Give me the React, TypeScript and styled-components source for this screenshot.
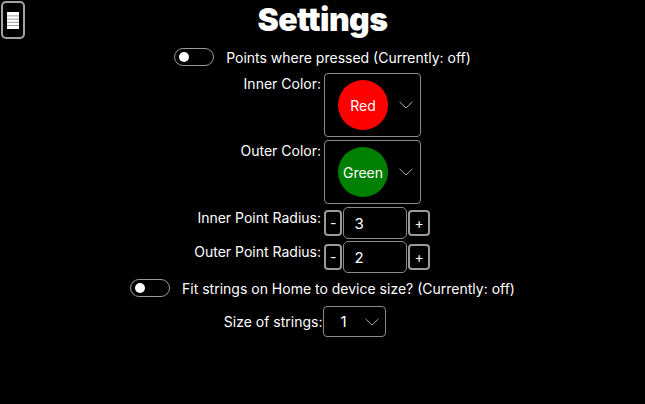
import React, { useState } from "react";
import styled, { createGlobalStyle } from "styled-components";

const GlobalStyle = createGlobalStyle`
  html, body {
    margin: 0;
    padding: 0;
    background: #000;
  }
  body {
    font-family: Inter, "Noto Sans", sans-serif;
    color: #fff;
  }
`;

const Page = styled.div`
  width: 645px;
  height: 404px;
  display: flex;
  flex-direction: column;
  align-items: stretch;
  gap: 3px;
`;

const Header = styled.header`
  height: 41px;
  display: grid;
  grid-template-columns: 1fr auto 1fr;
  align-items: start;
`;

const MenuButton = styled.button`
  margin: 1px 0 0 1px;
  width: 24px;
  height: 38px;
  padding: 0;
  border: 2px solid #a3a3a3;
  border-radius: 5px;
  background: #000;
  display: flex;
  align-items: center;
  justify-content: center;
  justify-self: start;
`;

const Title = styled.h1`
  margin: 0;
  font-size: 32px;
  line-height: 40px;
  font-weight: 900;
  letter-spacing: -0.6px;
  color: #fff;
`;

const ToggleRow = styled.label`
  height: 26px;
  display: flex;
  align-items: center;
  justify-content: center;
  gap: 12px;
  font-size: 14px;
`;

const Track = styled.span<{ $on: boolean }>`
  width: 40px;
  height: 18px;
  box-sizing: border-box;
  border: 1px solid #9a9a9a;
  border-radius: 9px;
  display: flex;
  align-items: center;
  padding: 0 4px;
  justify-content: ${(p) => (p.$on ? "flex-end" : "flex-start")};
`;

const Knob = styled.span`
  width: 10px;
  height: 10px;
  border-radius: 50%;
  background: #fff;
`;

const Row = styled.div<{ $h: number; $center?: boolean }>`
  height: ${(p) => p.$h}px;
  display: flex;
  align-items: ${(p) => (p.$center ? "center" : "flex-start")};
  font-size: 14px;
`;

const Label = styled.div<{ $pad?: number }>`
  flex: 1;
  text-align: right;
  padding-right: ${(p) => p.$pad ?? 3}px;
  padding-top: ${(p) => (p.$pad === 0 ? 0 : 2)}px;
  line-height: 17px;
`;

const Control = styled.div`
  flex: 1;
  display: flex;
  align-items: center;
`;

const ColorBox = styled.div`
  width: 97px;
  height: 64px;
  box-sizing: border-box;
  border: 1px solid #8c8c8c;
  border-radius: 4px;
  display: flex;
  align-items: center;
  padding-left: 13px;
  gap: 11px;
`;

const Swatch = styled.div<{ $color: string }>`
  width: 50px;
  height: 50px;
  border-radius: 50%;
  background: ${(p) => p.$color};
  display: flex;
  align-items: center;
  justify-content: center;
  font-size: 14px;
  color: #fff;
`;

const StepButton = styled.button`
  height: 26px;
  padding: 0 4px;
  border: 2px solid #9a9a9a;
  border-radius: 4px;
  background: #000;
  color: #fff;
  font-family: Inter, sans-serif;
  font-size: 14px;
  line-height: 1;
`;

const NumberBox = styled.div`
  width: 64px;
  height: 32px;
  margin: 0 1px 0 1px;
  box-sizing: border-box;
  border: 1.5px solid #8c8c8c;
  border-radius: 5px;
  display: flex;
  align-items: center;
  padding-left: 10px;
  font-size: 15px;
`;

const SizeSelect = styled.div`
  width: 63px;
  height: 31px;
  box-sizing: border-box;
  border: 1px solid #8c8c8c;
  border-radius: 4px;
  display: flex;
  align-items: center;
  padding-left: 17px;
  gap: 18px;
  font-size: 15px;
`;

function MenuIcon() {
  return (
    <svg width="12" height="17" viewBox="0 0 12 17">
      <rect x="0" y="0" width="12" height="17" fill="#fff" />
      {[3.5, 6.7, 9.9, 13.1].map((y) => (
        <rect key={y} x="0" y={y} width="12" height="0.8" fill="#888" />
      ))}
    </svg>
  );
}

function Chevron() {
  return (
    <svg width="14" height="8" viewBox="0 0 14 8">
      <path d="M0.5 0.8 L7 7 L13.5 0.8" fill="none" stroke="#a8a8a8" strokeWidth="1" />
    </svg>
  );
}

function Toggle({ text }: { text: string }) {
  const [on, setOn] = useState(false);
  return (
    <ToggleRow onClick={() => setOn(!on)}>
      <Track $on={on}>
        <Knob />
      </Track>
      <span>
        {text} (Currently: {on ? "on" : "off"})
      </span>
    </ToggleRow>
  );
}

function Stepper({ value }: { value: number }) {
  return (
    <Control>
      <StepButton>-</StepButton>
      <NumberBox>{value}</NumberBox>
      <StepButton>+</StepButton>
    </Control>
  );
}

export default function App() {
  return (
    <>
      <GlobalStyle />
      <Page>
        <Header>
          <MenuButton>
            <MenuIcon />
          </MenuButton>
          <Title>Settings</Title>
        </Header>
        <Toggle text="Points where pressed" />
        <Row $h={64}>
          <Label>Inner Color:</Label>
          <Control>
            <ColorBox>
              <Swatch $color="#ff0000">Red</Swatch>
              <Chevron />
            </ColorBox>
          </Control>
        </Row>
        <Row $h={64}>
          <Label>Outer Color:</Label>
          <Control>
            <ColorBox>
              <Swatch $color="#008000">Green</Swatch>
              <Chevron />
            </ColorBox>
          </Control>
        </Row>
        <Row $h={31}>
          <Label>Inner Point Radius:</Label>
          <Stepper value={3} />
        </Row>
        <Row $h={31}>
          <Label>Outer Point Radius:</Label>
          <Stepper value={2} />
        </Row>
        <Toggle text="Fit strings on Home to device size?" />
        <Row $h={31} $center style={{ marginTop: 2 }}>
          <Label $pad={0}>Size of strings:</Label>
          <Control>
            <SizeSelect>
              1
              <Chevron />
            </SizeSelect>
          </Control>
        </Row>
      </Page>
    </>
  );
}
